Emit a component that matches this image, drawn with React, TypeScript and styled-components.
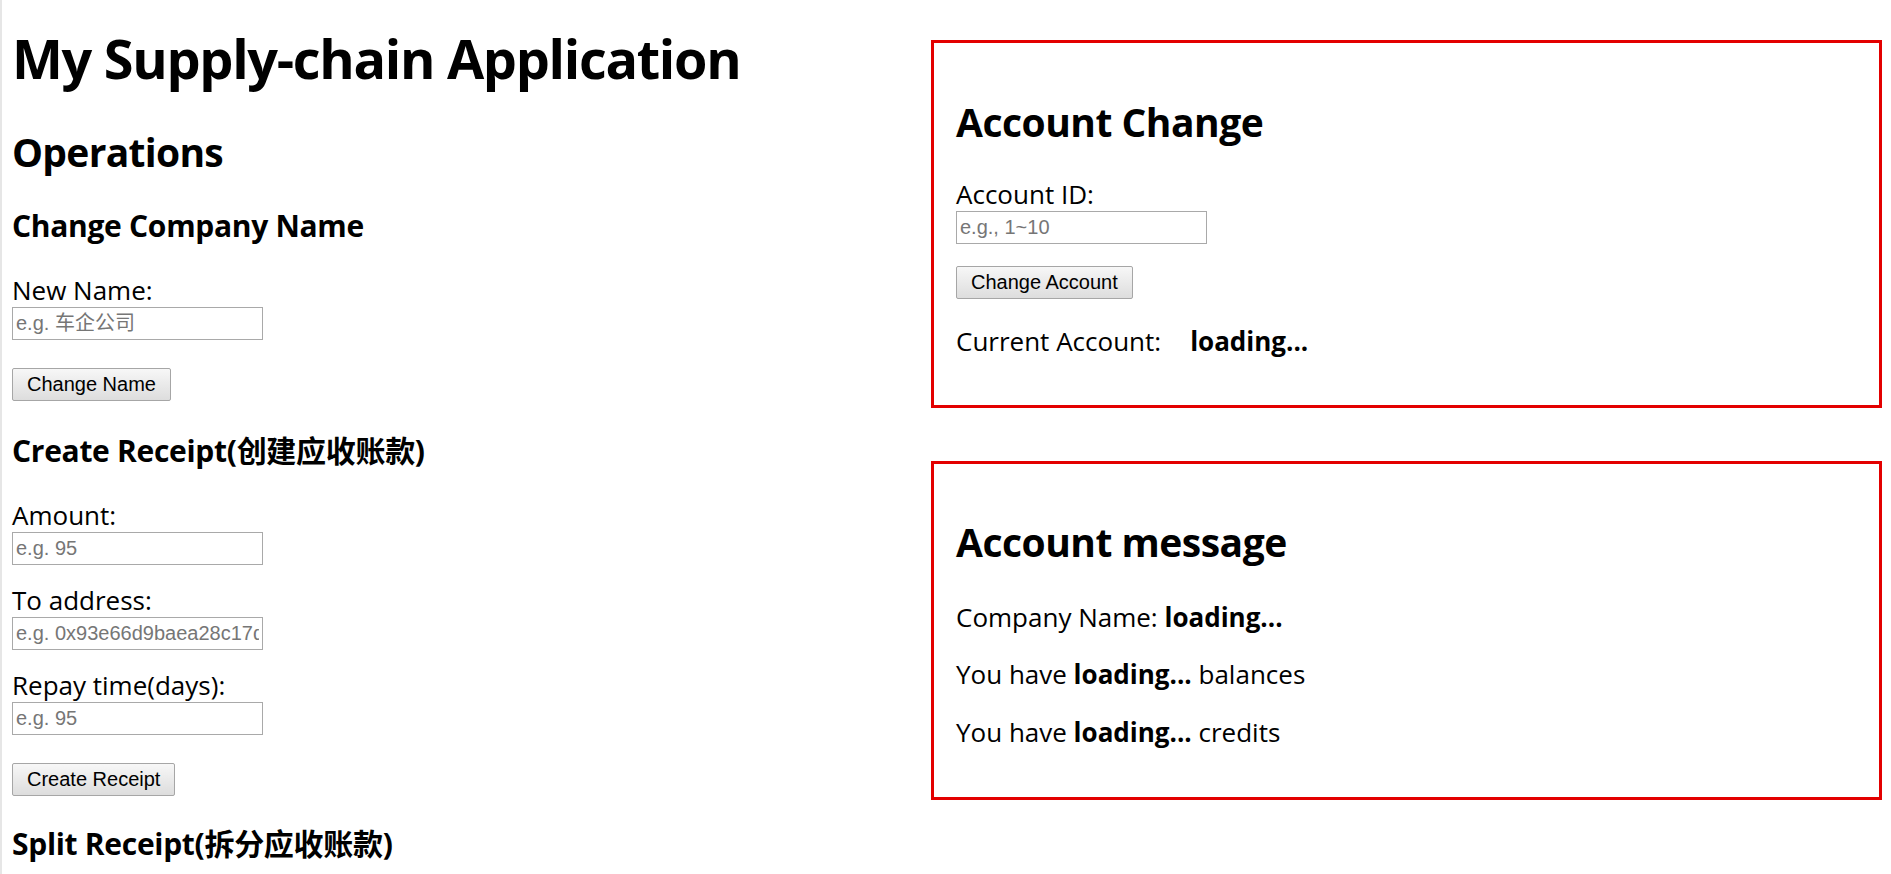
import React from "react";
import styled, { createGlobalStyle } from "styled-components";

const GlobalStyle = createGlobalStyle`
  html, body {
    margin: 0;
    padding: 0;
    background: #ffffff;
  }
  body {
    font-family: "Open Sans", "Noto Sans CJK SC", sans-serif;
    color: #000000;
  }
  * { box-sizing: border-box; }
`;

const Page = styled.div`
  display: flex;
  align-items: flex-start;
  min-height: 874px;
  border-left: 2px solid #e6e6e6;
  padding-left: 10px;
`;

const LeftColumn = styled.main`
  width: 919px;
  display: flex;
  flex-direction: column;
  align-items: flex-start;
`;

const RightColumn = styled.aside`
  width: 951px;
  display: flex;
  flex-direction: column;
  gap: 53px;
  padding-top: 40px;
`;

const Title = styled.h1`
  margin: 26px 0 0;
  font-size: 54px;
  line-height: 64px;
  font-weight: 700;
  letter-spacing: -1.3px;
  white-space: nowrap;
`;

const SectionTitle = styled.h2`
  margin: 38px 0 0;
  font-size: 39px;
  line-height: 48px;
  font-weight: 700;
  letter-spacing: -0.7px;
`;

const SubTitle = styled.h3<{ $gap: number }>`
  margin: ${(p) => p.$gap}px 0 0;
  font-size: 30px;
  line-height: 40px;
  font-weight: 700;
  letter-spacing: -0.3px;
  white-space: nowrap;
`;

const Field = styled.div<{ $gap: number }>`
  display: flex;
  flex-direction: column;
  align-items: flex-start;
  margin-top: ${(p) => p.$gap}px;
`;

const Label = styled.label`
  font-size: 26px;
  line-height: 32px;
`;

const TextInput = styled.input`
  width: 251px;
  height: 33px;
  margin: 1px 0 0;
  padding: 0 3px;
  border: 1px solid #a9a9a9;
  border-radius: 0;
  background: #ffffff;
  font-family: "Liberation Sans", Arial, "Noto Sans CJK SC", sans-serif;
  font-size: 20px;
  color: #000000;
  outline: none;
  &::placeholder {
    color: #767676;
    opacity: 1;
  }
`;

const ActionButton = styled.button<{ $gap: number }>`
  margin: ${(p) => p.$gap}px 0 0;
  height: 33px;
  padding: 0 14px;
  border: 1px solid #a6a6a6;
  border-radius: 2px;
  background: linear-gradient(#f7f7f7, #dddddd);
  font-family: "Liberation Sans", Arial, sans-serif;
  font-size: 20px;
  line-height: 31px;
  color: #000000;
  white-space: nowrap;
`;

const Panel = styled.section<{ $top: number; $bottom: number }>`
  border: 3px solid #e30000;
  padding: ${(p) => p.$top}px 22px ${(p) => p.$bottom}px;
  display: flex;
  flex-direction: column;
  align-items: flex-start;
`;

const PanelTitle = styled.h2`
  margin: 0;
  font-size: 39px;
  line-height: 48px;
  font-weight: 700;
  letter-spacing: -0.5px;
`;

const InfoLine = styled.p<{ $gap: number }>`
  margin: ${(p) => p.$gap}px 0 0;
  font-size: 26px;
  line-height: 32px;
  white-space: nowrap;
`;

const Value = styled.strong<{ $offset?: number }>`
  font-weight: 700;
  margin-left: ${(p) => p.$offset ?? 0}px;
`;

export default function App() {
  return (
    <>
      <GlobalStyle />
      <Page>
        <LeftColumn>
          <Title>My Supply-chain Application</Title>
          <SectionTitle>Operations</SectionTitle>

          <SubTitle $gap={30}>Change Company Name</SubTitle>
          <Field $gap={28}>
            <Label>New Name:</Label>
            <TextInput placeholder="e.g. 车企公司" />
          </Field>
          <ActionButton $gap={28}>Change Name</ActionButton>

          <SubTitle $gap={30}>Create Receipt(创建应收账款)</SubTitle>
          <Field $gap={28}>
            <Label>Amount:</Label>
            <TextInput placeholder="e.g. 95" />
          </Field>
          <Field $gap={19}>
            <Label>To address:</Label>
            <TextInput placeholder="e.g. 0x93e66d9baea28c17d9fc393b53e3fbdd76899dae" />
          </Field>
          <Field $gap={19}>
            <Label>Repay time(days):</Label>
            <TextInput placeholder="e.g. 95" />
          </Field>
          <ActionButton $gap={28}>Create Receipt</ActionButton>

          <SubTitle $gap={28}>Split Receipt(拆分应收账款)</SubTitle>
        </LeftColumn>

        <RightColumn>
          <Panel $top={55} $bottom={48}>
            <PanelTitle>Account Change</PanelTitle>
            <Field $gap={32}>
              <Label>Account ID:</Label>
              <TextInput placeholder="e.g., 1~10" />
            </Field>
            <ActionButton $gap={22}>Change Account</ActionButton>
            <InfoLine $gap={26}>
              Current Account:<Value $offset={29}>loading...</Value>
            </InfoLine>
          </Panel>

          <Panel $top={54} $bottom={49}>
            <PanelTitle>Account message</PanelTitle>
            <InfoLine $gap={35}>
              Company Name: <Value>loading...</Value>
            </InfoLine>
            <InfoLine $gap={25}>
              You have <Value>loading...</Value> balances
            </InfoLine>
            <InfoLine $gap={26}>
              You have <Value>loading...</Value> credits
            </InfoLine>
          </Panel>
        </RightColumn>
      </Page>
    </>
  );
}
